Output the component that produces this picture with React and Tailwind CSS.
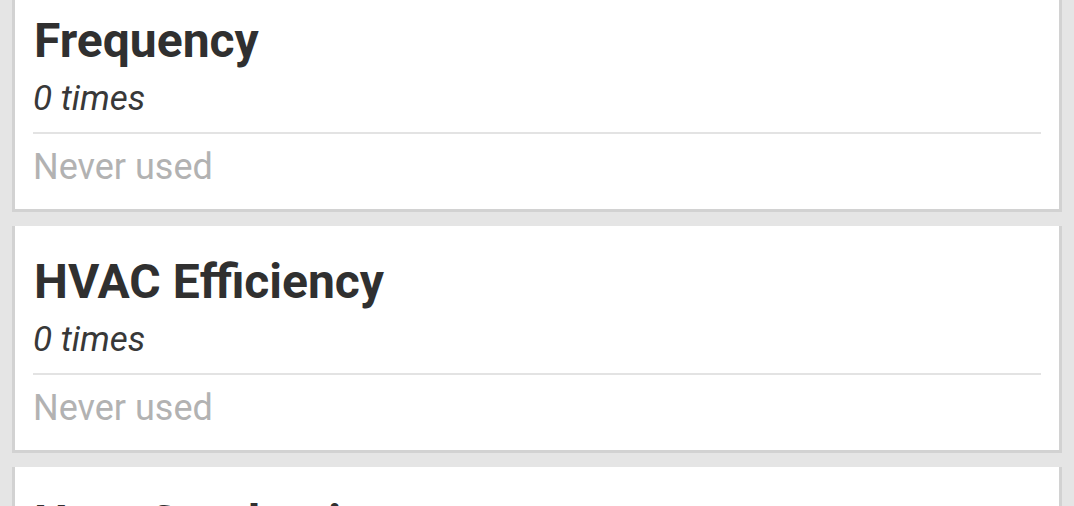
import React from 'react';

const items = [
  { name: 'Frequency', count: '0 times', last: 'Never used' },
  { name: 'HVAC Efficiency', count: '0 times', last: 'Never used' },
  { name: 'Heat Conduction', count: '0 times', last: 'Never used' },
];

function UsageCard({ item }) {
  return (
    <div className="bg-white border-l-[3px] border-r-[3px] border-b-[3px] border-[#d2d2d2] pt-[29px] pb-[22px]">
      <div className="px-[18px]">
        <h2 className="text-[48px] leading-[54px] font-bold text-[#303030] px-[1px]">{item.name}</h2>
        <p className="mt-[11px] text-[35px] leading-[40px] italic text-[#383838]">{item.count}</p>
        <div className="mt-[13px] h-[2px] bg-[#e3e3e3]" />
        <p className="mt-[13px] text-[36px] leading-[40px] text-[#b2b2b2]">{item.last}</p>
      </div>
    </div>
  );
}

export default function App() {
  return (
    <div className="h-[506px] overflow-hidden bg-[#e5e5e5]" style={{ fontFamily: 'Roboto, "Noto Sans", sans-serif' }}>
      <div className="mt-[-15px] mx-[12px] flex flex-col gap-[14px]">
        {items.map((item) => (
          <UsageCard key={item.name} item={item} />
        ))}
      </div>
    </div>
  );
}
